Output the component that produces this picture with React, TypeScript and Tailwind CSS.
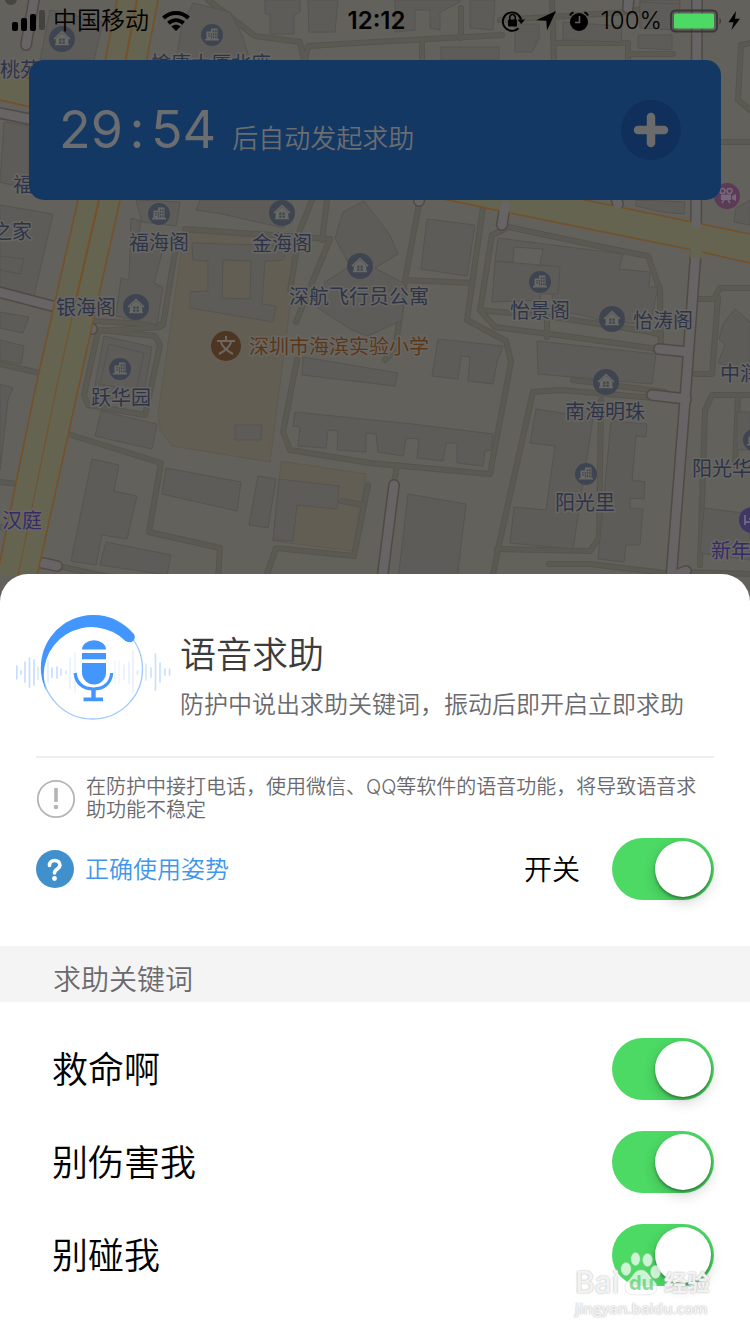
import { useState } from "react";
import type { ReactNode } from "react";

const CJK = "font-['Inter','Noto_Sans_CJK_SC',sans-serif]";

const buildings = [
  "0,205 53,214 34,296 0,288",
  "0,256 24,259 20,274 0,270",
  "0,312 29,317 23,333 0,328",
  "0,340 24,346 21,364 0,360",
  "0,384 13,388 8,400 0,470",
  "136,200 180,202 176,226 142,222",
  "131,218 141,221 138,240 164,246 154,283 163,287 157,325 116,316 121,278 129,280",
  "104,336 152,347 142,405 93,395",
  "109,344 144,353 136,391 100,384",
  "200,200 287,200 284,228 222,214 196,210",
  "192,243 288,246 283,260 265,261 262,304 276,306 273,322 190,308 190,292 208,291 208,261 193,260",
  "343,212 364,201 390,235 398,254 375,268 405,284 402,320 368,336 352,330 318,308 325,282 350,266 335,238",
  "427,219 475,225 467,276 421,269",
  "498,238 623,254 619,269 650,272 649,287 658,287 650,325 598,320 586,316 555,310 552,295 560,267 540,265 543,249 514,247 513,262 495,261",
  "495,261 560,267 558,294 541,294 540,300 492,302",
  "537,341 656,354 652,384 538,374",
  "303,357 398,373 395,386 302,375",
  "438,339 503,346 497,362 493,384 468,381 470,357 461,356 458,379 432,376",
  "295,412 412,424 493,434 491,450 485,451 483,466 457,463 457,443 446,443 443,461 417,458 419,439 406,438 403,456 378,452 376,434 366,433 366,452 337,450 338,431 328,430 326,448 298,446 300,427 293,426",
  "101,411 157,424 152,449 95,436",
  "92,459 119,465 114,491 137,496 127,539 102,535 96,565 71,561",
  "166,468 241,482 237,511 162,494",
  "106,542 171,555 167,575 100,565",
  "258,476 276,479 268,528 249,525",
  "279,479 339,486 337,509 297,505 293,541 273,540",
  "235,425 262,425 261,440 235,440",
  "408,494 466,504 457,580 398,580",
  "536,409 593,418 573,549 510,543 514,507 546,510 555,446 530,443",
  "611,421 647,424 646,437 636,436 632,480 645,482 644,499 630,498 630,508 643,509 640,545 626,545 624,562 598,559",
  "735,309 750,322 750,371 718,363 725,345 719,339 723,324",
  "737,412 750,412 750,450 737,450",
  "704,508 750,514 750,560 700,553",
  "640,0 680,0 678,22 640,18",
  "640,2 680,4 677,30 640,28",
  "415,10 430,10 430,28 440,30 440,12 460,2 460,0 395,0 395,32 415,30",
  "470,0 495,0 493,30 470,28",
  "515,24 539,24 539,38 532,52 515,52",
  "563,22 622,26 621,42 563,40",
  "638,35 672,35 672,50 638,48",
  "441,47 499,47 499,60 441,60",
  "265,0 300,0 300,12 294,15 294,34 270,34 270,14 265,14",
  "308,0 338,0 335,32 309,32",
  "193,3 230,12 242,35 250,60 176,60 182,25",
  "50,10 103,22 94,60 40,60",
  "4,122 29,126 29,190 0,182",
  "636,200 685,202 684,214 662,212 636,206",
  "736,208 750,200 750,225 734,222",
];

const lanes = [
  "185,229 330,239 296,322",
  "312,200 300,230 290,290",
  "327,200 322,240",
  "419,204 405,280 395,350 385,360",
  "405,280 472,283",
  "484,200 467,320 506,341 511,362 490,474 370,463 290,450 283,432 297,360",
  "508,227 617,250 648,256 660,290 661,350",
  "505,229 492,235 480,310 495,327 565,336 658,349",
  "480,310 560,318 650,332 661,335",
  "547,320 547,337",
  "177,240 163,325 95,321",
  "160,327 98,331 84,395 88,405 145,415 160,345 155,336 100,330",
  "68,434 161,463 149,532 220,548 218,580",
  "58,566 110,577",
  "0,482 18,484",
  "0,364 40,373",
  "0,262 18,267",
  "0,527 15,529",
  "265,580 276,548 354,556 368,485",
  "341,501 364,505",
  "397,465 394,484",
  "533,392 560,390 655,398",
  "533,392 500,540 492,580",
  "573,380 665,392",
  "601,400 599,538 590,551 497,549",
  "549,564 590,564 665,573",
  "700,565 705,410 712,395 750,395",
  "738,396 735,465",
  "718,298 712,374 695,374",
  "698,299 714,299 720,288 750,288",
  "685,572 750,574",
  "208,0 255,36 300,42 304,60",
  "305,60 308,46 375,42 502,35",
  "461,8 461,38",
  "422,42 422,60",
  "552,0 554,60",
  "554,43 628,43 628,60",
  "500,20 630,12 672,0",
  "630,54 673,54",
  "750,43 741,45 738,100 750,110",
  "721,142 750,142",
];

const mainStreets = [
  "-5,291 56,307",
  "38,562 57,566",
  "34,0 26,45",
  "-5,112 29,119",
  "697,-5 696,250 685,400 671,580",
  "659,349 688,352",
  "652,395 686,399",
  "678,574 686,571",
  "505,205 502,225",
  "394,485 382,580",
  "629,-5 628,8",
  "420,196 419,201",
  "88,329 92,329",
  "616,198 618,204",
];

type PinKind = "house" | "tower";
const pins: { kind: PinKind; x: number; y: number }[] = [
  { kind: "house", x: 62, y: 39 },
  { kind: "tower", x: 212, y: 35 },
  { kind: "tower", x: 159, y: 214 },
  { kind: "house", x: 282, y: 213 },
  { kind: "house", x: 136, y: 307 },
  { kind: "house", x: 360, y: 266 },
  { kind: "tower", x: 540, y: 282 },
  { kind: "house", x: 612, y: 319 },
  { kind: "tower", x: 120, y: 369 },
  { kind: "house", x: 606, y: 382 },
  { kind: "tower", x: 586, y: 474 },
  { kind: "tower", x: 754, y: 440 },
];

const places = [
  { t: "桃苑", x: 0, y: 77, c: "fill-[#2e3448]" },
  { t: "愉康大厦北座", x: 151, y: 71, c: "fill-[#2e3448]" },
  { t: "福", x: 13, y: 192, c: "fill-[#2e3448]" },
  { t: "之家", x: -8, y: 239, c: "fill-[#2e3448]" },
  { t: "福海阁", x: 129, y: 250, c: "fill-[#2e3448]" },
  { t: "金海阁", x: 252, y: 251, c: "fill-[#2e3448]" },
  { t: "银海阁", x: 56, y: 315, c: "fill-[#2e3448]" },
  { t: "深航飞行员公寓", x: 289, y: 304, c: "fill-[#2e3448]" },
  { t: "怡景阁", x: 510, y: 318, c: "fill-[#2e3448]" },
  { t: "怡涛阁", x: 633, y: 328, c: "fill-[#2e3448]" },
  { t: "跃华园", x: 91, y: 405, c: "fill-[#2e3448]" },
  { t: "南海明珠", x: 565, y: 419, c: "fill-[#2e3448]" },
  { t: "中润", x: 720, y: 381, c: "fill-[#2e3448]" },
  { t: "阳光华", x: 692, y: 476, c: "fill-[#2e3448]" },
  { t: "阳光里", x: 555, y: 510, c: "fill-[#2e3448]" },
  { t: "深圳市海滨实验小学", x: 249, y: 354, c: "fill-[#5b3719]" },
  { t: "汉庭", x: 2, y: 528, c: "fill-[#352c66]" },
  { t: "新年", x: 711, y: 558, c: "fill-[#352c66]" },
];

function Pin({ kind, x, y }: { kind: PinKind; x: number; y: number }) {
  return (
    <g transform={`translate(${x} ${y})`}>
      {kind === "house" ? (
        <>
          <circle r="13" fill="#3f4451" />
          <path d="M-8 0 0-7.5 8 0M-5.500-1V5.500M5.500-1V5.500M-7 5.500H7" fill="none" stroke="#696964" strokeWidth="1.5" />
          <path d="M-5-1.500 0-6 5-1.500V5H-5Z" fill="#696964" />
          <path d="M-2.800-.5h2.200v2.200h-2.200ZM.6-.5h2.200v2.200H.6ZM-2.800 2.500h2.200v2.200h-2.200ZM.6 2.500h2.200v2.200H.6Z" fill="#3f4451" />
        </>
      ) : (
        <>
          <circle r="11" fill="#3f4451" />
          <path d="M-1-6.500H5.500V4H7V5.500H-7V4H-5.500V-3.500H-1Z" fill="#696964" />
          <path d="M.8-4.800h1.400v2H.8ZM3.200-4.800h1.400v2H3.200ZM.8-1.800h1.400v2H.8ZM3.200-1.800h1.400v2H3.200ZM.8 1.200h1.400v2H.8ZM3.200 1.200h1.400v2H3.200ZM-4-1.800h2.400v1H-4ZM-4 .6h2.400v1H-4ZM-1 -2h.7V4H-1Z" fill="#3f4451" />
        </>
      )}
    </g>
  );
}

function CityMap() {
  return (
    <svg
      viewBox="0 0 750 604"
      preserveAspectRatio="xMinYMin slice"
      className="absolute inset-0 h-full w-full bg-[#63615c]"
      aria-label="地图"
    >
      <g fill="#635e54" stroke="#5e594f">
        <path d="M184 232 300 240 291 300 270 462 172 446 160 430 158 415Z" />
        <path d="M281 461 366 474 353 551 273 541Z" />
      </g>
      <g fill="none" strokeLinecap="round" strokeLinejoin="round">
        {lanes.map((p) => (
          <polyline key={p} points={p} stroke="#56544e" strokeWidth="6" />
        ))}
        {lanes.map((p) => (
          <polyline key={p} points={p} stroke="#5b5a52" strokeWidth="4" />
        ))}
      </g>
      <g fill="#5e5c58" stroke="#565450" strokeWidth="1">
        {buildings.map((p) => (
          <polygon key={p} points={p} />
        ))}
      </g>
      <path d="M223 260 251 261 250 299 222 298Z" fill="#635e54" stroke="#55534f" />
      <g fill="none" strokeLinecap="round" strokeLinejoin="round">
        {mainStreets.map((p) => (
          <polyline key={p} points={p} stroke="#504a46" strokeWidth="12" />
        ))}
      </g>
      <path d="M-5 71 585 200 750 234V263L693 250 510 213 448 200-5 99Z" fill="#656450" />
      <path d="M-5 71 585 200 750 234M-5 99 448 200 510 213 693 250 750 263" fill="none" stroke="#755029" strokeWidth="1.5" />
      <g fill="none" strokeLinecap="round" strokeLinejoin="round">
        {mainStreets.map((p) => (
          <polyline key={p} points={p} stroke="#666464" strokeWidth="9" />
        ))}
      </g>
      <path d="M697 228 696 258" stroke="#656450" strokeWidth="12" />
      <path d="M117 0H158L120 200 78 390 37 576H-3L35 390 78 200Z" fill="#656450" />
      <path d="M117 0 78 200 35 390-3 576M158 0 120 200 78 390 37 576" fill="none" stroke="#755029" strokeWidth="1.5" />
      <path d="M137 0 99 200 77 295" fill="none" stroke="#755029" strokeWidth="2" />
      <path d="M77 295 56 390 18 576" fill="none" stroke="#755029" strokeWidth="1" />
      <circle cx="11" cy="-1" r="6" fill="#474643" />
      {pins.map((p) => (
        <Pin key={`${p.x}-${p.y}`} {...p} />
      ))}
      <g transform="translate(226 346)">
        <circle r="15" fill="#4e3623" />
        <path d="M0-10V-5M-9-5H9M-5.500-5C-4 1 1 5 7 8M5.500-5C4 1-1 5-7 8" fill="none" stroke="#6c675f" strokeWidth="2" />
      </g>
      <g transform="translate(727 196)">
        <circle r="13" fill="#5b3b58" />
        <g fill="none" stroke="#77677a" strokeWidth="1.500">
          <circle cx="-4.500" cy="-5" r="2.500" />
          <circle cx="2.500" cy="-5" r="2.500" />
          <path d="M-3 4-5 7M1 4 3 7" />
        </g>
        <path d="M-6-1.500H4V4H-6ZM5 0 9-2V5L5 3Z" fill="#77677a" />
      </g>
      <g transform="translate(752 520)">
        <circle r="13" fill="#413764" />
        <path d="M-7-5V5M-7 2H5M-3-1H5" stroke="#77738a" strokeWidth="1.500" />
      </g>
      <g className={`${CJK} text-[20px] font-normal [paint-order:stroke]`} stroke="#696763" strokeWidth="3" strokeLinejoin="round">
        {places.map((p) => (
          <text key={p.t} x={p.x} y={p.y} className={p.c}>
            {p.t}
          </text>
        ))}
      </g>
    </svg>
  );
}

function StatusBar() {
  return (
    <div className="relative grid h-[42px] grid-cols-[1fr_auto_1fr] items-center pl-3 pr-[9px] text-black">
      <div className="flex items-center">
        <svg width="34" height="22" viewBox="0 0 34 22" aria-hidden="true">
          <rect x="0" y="12" width="6" height="9" rx="2" />
          <rect x="9" y="8" width="6" height="13" rx="2" />
          <rect x="18" y="4" width="6" height="17" rx="2" />
          <rect x="27" y="0" width="6" height="20" rx="2" opacity="0.3" />
        </svg>
        <span className="ml-[7px] text-[24px] font-[350] leading-[30px]">中国移动</span>
        <svg className="ml-3" width="30" height="22" viewBox="0 0 30 22" fill="none" stroke="currentColor" strokeWidth="4" aria-hidden="true">
          <path d="M2.500 8C9.500 1.300 20.500 1.300 27.500 8" />
          <path d="M7.500 13.200C12 9.200 18 9.200 22.500 13.200" />
          <path d="M15 21 10.300 16.500C13 14.200 17 14.200 19.700 16.500Z" fill="currentColor" stroke="none" />
        </svg>
      </div>
      <span className="text-[24px] font-semibold leading-[30px]">12:12</span>
      <div className="flex items-center justify-end">
        <svg width="24" height="24" viewBox="0 0 24 24" aria-hidden="true">
          <path d="M17.500 19.200A9.200 9.200 0 1 1 20 10.500" fill="none" stroke="currentColor" strokeWidth="1.900" />
          <path d="M16.500 10.500H24L20.200 15Z" />
          <rect x="7" y="10.500" width="9" height="7" rx="1" />
          <path d="M8.800 11V8.500A2.600 2.800 0 0 1 14.200 8.500V11" fill="none" stroke="currentColor" strokeWidth="1.500" />
        </svg>
        <svg className="ml-[11px]" width="20" height="20" viewBox="0 0 20 20" aria-hidden="true">
          <path d="M20 0 11 19.500 10.300 9.700 0 9.300Z" />
        </svg>
        <svg className="ml-3" width="22" height="22" viewBox="0 0 22 22" aria-hidden="true">
          <circle cx="11" cy="12" r="9" />
          <path d="M2 5.500A6 6 0 0 1 5.500 2.300M20 5.500A6 6 0 0 0 16.500 2.300" fill="none" stroke="currentColor" strokeWidth="2" />
          <path d="M11.500 6V12.500H7" fill="none" stroke="#63615c" strokeWidth="1.600" />
        </svg>
        <span className="ml-[10px] text-[24px] font-light leading-[30px]">100%</span>
        <svg className="ml-2" width="71" height="24" viewBox="0 0 71 24" aria-hidden="true">
          <rect x="1" y="1.500" width="46" height="21" rx="4.500" fill="none" stroke="#393835" strokeWidth="2" />
          <rect x="4" y="4.500" width="40" height="15" rx="1.500" fill="#4cd964" />
          <path d="M49.500 8.500Q52.500 12 49.500 15.500Z" fill="#393835" />
          <path d="M66 2 58.500 13.200H63.500L61.500 21 70 9.700H65Z" />
        </svg>
      </div>
    </div>
  );
}

function Countdown() {
  return (
    <div className="relative mx-[29px] mt-[18px] flex h-[140px] items-center justify-between rounded-[15px] bg-[#143864] pl-[30px] pr-10 text-[#6b6d70]">
      <p className="flex items-baseline">
        <span className="flex items-baseline text-[52px] font-normal leading-[60px]">
          29<span className="w-7 text-center">:</span>54
        </span>
        <span className="ml-4 text-[26px] font-[350] leading-[30px]">后自动发起求助</span>
      </p>
      <button type="button" aria-label="添加时间" className="flex h-[60px] w-[60px] items-center justify-center rounded-full bg-[#10305b]">
        <svg width="36" height="36" viewBox="0 0 36 36" aria-hidden="true">
          <path d="M18 5V31M5 18H31" stroke="#6b6b6b" strokeWidth="8.500" strokeLinecap="round" />
        </svg>
      </button>
    </div>
  );
}

const waves: [number, number, number, number][] = [
  [16.8, 666, 679, 0.3], [21, 671, 674, 0.3], [25, 662, 682, 0.3], [29.5, 658, 687, 0.3], [34, 660, 685, 0.3],
  [38, 667, 679, 0.2], [48, 660, 683, 0.15], [52, 668, 677, 0.3], [57, 667, 678, 0.3], [61, 669, 675, 0.25],
  [66, 671, 674, 0.2], [70, 658, 688, 0.12], [75, 653, 692, 0.1], [115, 661, 683, 0.07], [119, 661, 683, 0.07],
  [124, 665, 679, 0.12], [129, 662, 683, 0.12], [133, 651, 693, 0.12], [137.5, 671, 674, 0.2], [146, 664, 680, 0.2],
  [151, 668, 677, 0.25], [155.5, 654, 690, 0.28], [160, 663, 682, 0.28], [165, 669, 675, 0.28], [169.5, 669, 675, 0.28],
];

function VoiceEmblem() {
  return (
    <svg className="shrink-0" width="156" height="110" viewBox="16 614 156 110" aria-hidden="true">
      {waves.map(([x, a, b, o]) => (
        <path key={x} d={`M${x} ${a}V${b}`} stroke="#3f95ff" strokeWidth="1.700" strokeLinecap="round" opacity={o} />
      ))}
      <circle cx="92.500" cy="669" r="50" fill="none" stroke="#9dc8fe" strokeWidth="1.300" />
      <path d="M132.500 632.500A52.500 52.500 0 0 0 46.400 691A48 48 0 0 1 126 641.500Z" fill="#4296fe" />
      <circle cx="129.500" cy="637" r="5.300" fill="#4296fe" />
      <g fill="#4296fe">
        <path d="M82 649.500A12 9.200 0 0 1 106 649.500Z" />
        <path d="M82 653H106V659.300H82Z" />
        <path d="M82 663H106V672.500A12 12 0 0 1 82 672.500Z" />
        <path d="M91.300 689H95.700V697.500H103V701.300H83.500V697.500H91.300Z" />
      </g>
      <path d="M75.200 673C76 683 83 689 93.500 689S111 683 111.700 673" fill="none" stroke="#4296fe" strokeWidth="3.200" />
    </svg>
  );
}

function Toggle({ id }: { id: string }) {
  const [on, setOn] = useState(true);
  return (
    <input
      id={id}
      type="checkbox"
      role="switch"
      checked={on}
      onChange={() => setOn(!on)}
      className="h-[62px] w-[102px] shrink-0 cursor-pointer appearance-none rounded-full bg-[#e5e5ea] p-[3px] before:block before:h-14 before:w-14 before:rounded-full before:bg-white before:shadow-[0_5px_14px_rgba(0,0,0,0.18),0_2px_3px_rgba(0,0,0,0.35)] before:transition-transform before:content-[''] checked:bg-[#4cd964] checked:before:translate-x-10"
    />
  );
}

function KeywordRow({ id, children }: { id: string; children: ReactNode }) {
  return (
    <li className="flex items-center justify-between">
      <label htmlFor={id} className="pt-[2px] text-[36px] font-[350] leading-[48px]">
        {children}
      </label>
      <Toggle id={id} />
    </li>
  );
}

function Watermark() {
  return (
    <div className="pointer-events-none absolute bottom-[17px] right-10 flex w-[135px] flex-col text-white/80 [text-shadow:0_0_2px_#bbb,0_0_1px_#ccc]">
      <div className="relative flex h-9 items-end justify-between">
        <span className="text-[30px] font-medium leading-[34px]">Bai</span>
        <svg className="absolute left-[45px] top-[-13px]" width="42" height="46" viewBox="0 0 42 46" aria-hidden="true">
          <g fill="#fff" fillOpacity="0.72" stroke="#ccc" strokeOpacity="0.5" strokeWidth="0.800">
            <ellipse cx="6" cy="19" rx="5" ry="6.500" />
            <ellipse cx="15.500" cy="9" rx="4.500" ry="6.500" />
            <ellipse cx="27.500" cy="10" rx="4.800" ry="6.500" />
            <ellipse cx="35.500" cy="22" rx="5" ry="6.500" />
            <path d="M21 20C14 20 13 27 8 31C3 35 4 44 12 44.500C17 45 25 45 30 44.500C38 44 39 35 34 31C29 27 28 20 21 20Z" />
          </g>
        </svg>
        <span className="absolute left-[54px] top-[7px] text-[20px] font-bold leading-[26px] text-[#58c86b]/70 [text-shadow:none]">du</span>
        <span className="text-[23px] font-bold leading-[32px]">经验</span>
      </div>
      <span className="font-['Open_Sans',sans-serif] text-[15px] font-semibold leading-[18px]">jingyan.baidu.com</span>
    </div>
  );
}

export default function App() {
  return (
    <main className={`relative min-h-screen overflow-hidden bg-white ${CJK}`}>
      <header className="relative h-[604px] overflow-hidden">
        <CityMap />
        <StatusBar />
        <Countdown />
      </header>
      <section className="relative -mt-[30px] rounded-t-[28px] bg-white pb-12 pt-10 text-black">
        <div className="flex pl-4 pr-9">
          <VoiceEmblem />
          <div className="ml-2 pt-4">
            <h1 className="text-[36px] font-[350] leading-[50px] text-[#3c3c3c]">语音求助</h1>
            <p className="whitespace-nowrap text-[24px] font-[350] leading-[50px] text-[#6a6a6e]">
              防护中说出求助关键词，振动后即开启立即求助
            </p>
          </div>
        </div>
        <hr className="mx-9 mt-[26px] border-0 border-t-2 border-[#eeeeee]" />
        <div className="mx-9 mt-[18px] flex items-center">
          <svg className="shrink-0" width="40" height="40" viewBox="0 0 40 40" aria-hidden="true">
            <circle cx="20" cy="20" r="18.200" fill="none" stroke="#b5b5b5" strokeWidth="1.800" />
            <path d="M20 9V23" stroke="#b5b5b5" strokeWidth="3.600" />
            <circle cx="20" cy="28" r="2.300" fill="#b5b5b5" />
          </svg>
          <p className="ml-[10px] pr-2 text-[20px] font-[350] leading-[23px] text-[#6a6a6e]">
            在防护中接打电话，使用微信、QQ等软件的语音功能，将导致语音求助功能不稳定
          </p>
        </div>
        <div className="mx-9 mt-4 flex items-center">
          <a href="#usage" className="flex items-center gap-[11px] text-[24px] font-[350] leading-[32px] text-[#3e97ec]">
            <svg width="38" height="38" viewBox="0 0 38 38" aria-hidden="true">
              <circle cx="19" cy="19" r="19" fill="#4090cd" />
              <path d="M13.500 15.500C13.500 8.800 24 8.800 24 15.200C24 19 18.500 19 18.500 23" fill="none" stroke="#fff" strokeWidth="3.600" strokeLinecap="round" />
              <circle cx="18.500" cy="28.500" r="2.400" fill="#fff" />
            </svg>
            <span className="pt-[2px]">正确使用姿势</span>
          </a>
          <label htmlFor="voice" className="ml-auto mr-8 pt-[2px] text-[28px] font-[350] leading-[36px]">
            开关
          </label>
          <Toggle id="voice" />
        </div>
        <h2 className="mt-[46px] h-14 bg-[#f4f4f4] pl-[53px] pt-[14px] text-[28px] font-[350] leading-[40px] text-[#6a6a6e]">
          求助关键词
        </h2>
        <ul className="flex flex-col gap-[31px] pl-[52px] pr-9 pt-9">
          <KeywordRow id="kw-1">救命啊</KeywordRow>
          <KeywordRow id="kw-2">别伤害我</KeywordRow>
          <KeywordRow id="kw-3">别碰我</KeywordRow>
        </ul>
        <Watermark />
      </section>
    </main>
  );
}
